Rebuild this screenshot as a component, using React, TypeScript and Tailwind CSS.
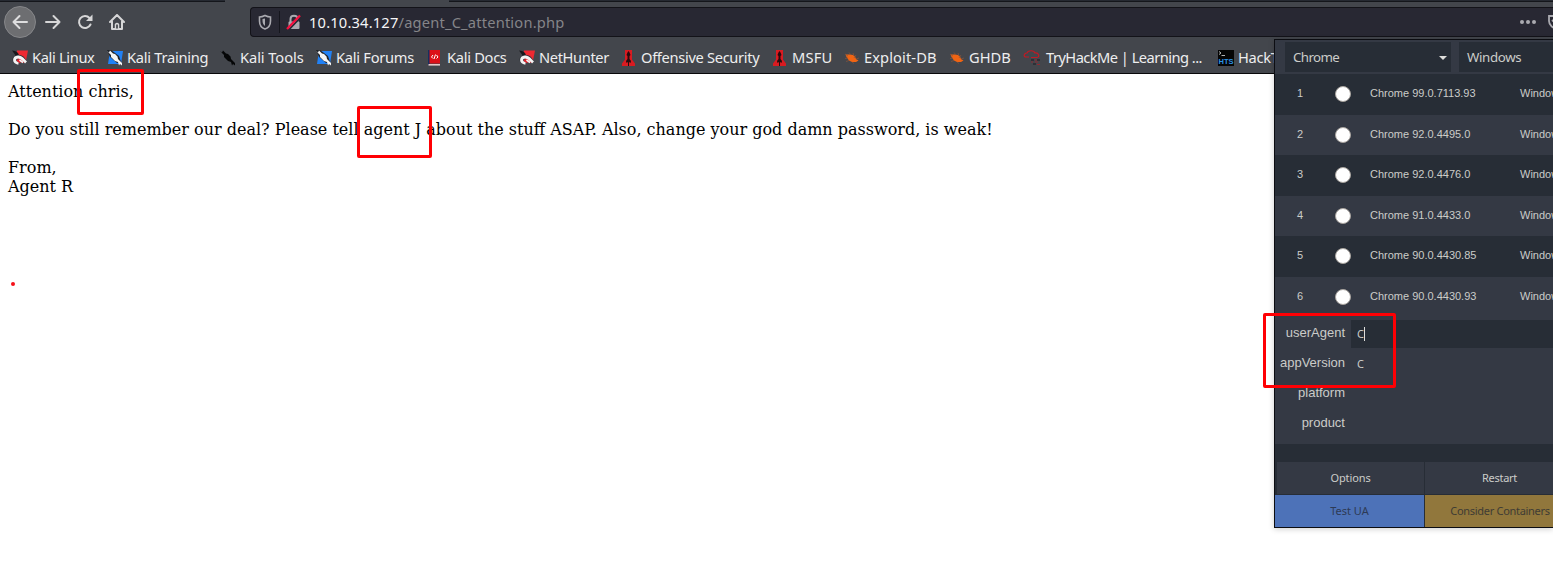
import React from "react";

function ToolShape({ fill }: { fill: string }) {
  return (
    <path
      d="M0 1 L2 2.500 L3 .5 L6 3.500 L8 4 L10.500 6.500 L11 9 L12.500 10.500 L15 13 L15 15.500 L13 14 L12 15.500 L11 12 L8 11 L6 9 L4 7 L4 5 Z"
      fill={fill}
    />
  );
}

function Magnet() {
  return (
    <svg className="size-4 shrink-0" viewBox="0 0 16 16">
      <path d="M5 0.500 H16 L13.500 13 L8 12 L4 6 Z" fill="#ee2932" />
      <path d="M0 .5 L3 1 L5 2 L7 4.500 L4 6 Z" fill="#17181c" />
      <path d="M3 12 C0 8.500 3.500 5.500 7 6 C10.500 6.300 12.500 9 13.500 12.500" fill="none" stroke="#2c2f35" strokeWidth="2.500" />
      <path d="M6.500 13.300 C1 12.500 1.500 7.500 6 7 C9.500 6.700 11 9.500 14 12.500" fill="none" stroke="#f4f4f4" strokeWidth="2.800" />
      <path d="M5 10 L8.500 12.500" stroke="#e5212b" strokeWidth="2" />
      <path d="M7.500 10 L11 12.500" stroke="#f4f4f4" strokeWidth="1.600" />
    </svg>
  );
}

function BlueTool() {
  return (
    <svg className="size-4 shrink-0" viewBox="0 0 16 16">
      <path d="M3 1 H16 L14 14 H1 Z" fill="#2181f5" />
      <path d="M0 0 L4 0 L12 6 L14 12 L10 13 L3 7 Z" fill="#22252a" />
      <ToolShape fill="#f5f5f5" />
    </svg>
  );
}

function BlackTool() {
  return (
    <svg className="size-4 shrink-0" viewBox="0 0 16 16">
      <ToolShape fill="#050607" />
    </svg>
  );
}

function Book() {
  return (
    <svg className="size-4 shrink-0" viewBox="0 0 16 16">
      <path d="M1 0 H3 V15 H1 Z" fill="#172f60" />
      <path d="M2.500 0 H13 V13.500 H2.500 Z" fill="#dc1018" />
      <path d="M1.500 14 H13 V15.600 H1.500 Z" fill="#e3c9c9" />
      <path d="M6 5 L4.500 7 L6 8.500 M9.500 5 L11 7 L9.500 8.500 M8.500 4.500 L7 9" fill="none" stroke="#fff" strokeWidth="1" />
    </svg>
  );
}

function Tower() {
  return (
    <svg className="size-4 shrink-0" viewBox="0 0 16 16">
      <path d="M4 0 H11 V9.500 L14 13.500 V16 H1 V13.500 L4 9.500 Z" fill="#d91b21" />
      <path d="M7.500 1 L8.500 2.500 L9.500 5 L8.500 6 V9 L10 11 L9.500 13 L8 12 V16 H7 V12 L5.500 13 L5 11 L6.500 9 V6 L5.500 5 L6.500 2.500 Z" fill="#260b0e" />
    </svg>
  );
}

function Bug() {
  return (
    <svg className="size-4 shrink-0" viewBox="0 0 16 16">
      <path d="M1.500 4.500 L6 4.500 L9 5 L11 6.500 L12 9 L14.500 10.500 L12 12 L8 12 L5 10.500 L2.500 7 Z" fill="#f06413" />
      <path d="M1 4 L4 6 M5 2.500 L7 5 M9 3 L10 6 M12 5 L10 8 M1 8.500 L4 8 M2 11.500 L5 10.500 M8 12 L10 13.500 M12 9 L15 8" stroke="#8d553a" strokeWidth=".7" />
    </svg>
  );
}

function Cloud() {
  return (
    <svg className="size-[18px] shrink-0" viewBox="0 0 18 18">
      <path d="M6 8 H3 C0 8 1 4 4 4 C5 1 11 1 12 4 C16 3.500 17 8 14 8.500 H8" fill="none" stroke="#c31923" strokeWidth="1.200" />
      <path d="M8 11 H11 M14 11 H17 M10 15 H13" stroke="#282a30" strokeWidth="1.300" />
      <path d="M12 11 H14 M8 13 H10 M12 13 H15 M14 15.500 H17" stroke="#8e2930" strokeWidth="1.200" />
    </svg>
  );
}

function Hts() {
  return (
    <svg className="size-4 shrink-0" viewBox="0 0 16 16">
      <rect width="16" height="16" fill="#050505" />
      <path d="M1 1.500 L3 3 L1 4.500 M3.500 5.500 H7" fill="none" stroke="#c6c6c6" strokeWidth=".9" />
      <text x="0.500" y="14" fontFamily="Liberation Sans" fontWeight="700" fontSize="8" textLength="15" lengthAdjust="spacingAndGlyphs" fill="#2b91e4">
        HTS
      </text>
    </svg>
  );
}

const bookmarks = [
  { name: "Kali Linux", icon: <Magnet />, width: "w-[95px]", tracking: "tracking-[-0.35px]" },
  { name: "Kali Training", icon: <BlueTool />, width: "w-[113px]", tracking: "tracking-[-0.27px]" },
  { name: "Kali Tools", icon: <BlackTool />, width: "w-[96px]", tracking: "tracking-[-0.07px]" },
  { name: "Kali Forums", icon: <BlueTool />, width: "w-[111px]", tracking: "tracking-[-0.27px]" },
  { name: "Kali Docs", icon: <Book />, width: "w-[92px]", tracking: "tracking-[-0.3px]" },
  { name: "NetHunter", icon: <Magnet />, width: "w-[102px]", tracking: "tracking-[-0.38px]" },
  { name: "Offensive Security", icon: <Tower />, width: "w-[151px]", tracking: "tracking-[-0.32px]" },
  { name: "MSFU", icon: <Tower />, width: "w-[72px]", tracking: "tracking-[0.2px]" },
  { name: "Exploit-DB", icon: <Bug />, width: "w-[105px]", tracking: "tracking-[0.1px]" },
  { name: "GHDB", icon: <Bug />, width: "w-[74px]", tracking: "tracking-normal" },
  { name: "TryHackMe | Learning ...", icon: <Cloud />, width: "w-[195px]", tracking: "ml-px tracking-[-0.54px]" },
  { name: "HackT", icon: <Hts />, width: "w-[120px]", tracking: "tracking-[-0.3px]" },
];

const agents = [
  "Chrome 99.0.7113.93",
  "Chrome 92.0.4495.0",
  "Chrome 92.0.4476.0",
  "Chrome 91.0.4433.0",
  "Chrome 90.0.4430.85",
  "Chrome 90.0.4430.93",
];

const fields = [
  { label: "userAgent", value: "C", active: true },
  { label: "appVersion", value: "C", active: false },
  { label: "platform", value: "", active: false },
  { label: "product", value: "", active: false },
];

function Toolbar() {
  return (
    <div className="flex h-[41px] items-start">
      <div className="flex h-10 w-[250px] shrink-0 items-center pl-1">
        <div className="flex size-8 items-center justify-center rounded-full border border-[#86878a] bg-[#6d6e71]">
          <svg className="size-4" viewBox="0 0 16 16" fill="none" stroke="#dededf" strokeWidth="2" strokeLinecap="round" strokeLinejoin="round">
            <path d="M15 8 H1.500 M7.500 2 L1.500 8 L7.500 14" />
          </svg>
        </div>
        <svg className="ml-[9px] size-4" viewBox="0 0 16 16" fill="none" stroke="#d6d6d7" strokeWidth="2" strokeLinecap="round" strokeLinejoin="round">
          <path d="M1 8 H14.500 M8.500 2 L14.500 8 L8.500 14" />
        </svg>
        <svg className="ml-4 size-4" viewBox="0 0 16 16">
          <path d="M13.500 10.500 A6 6 0 1 1 12.500 4" fill="none" stroke="#d6d6d7" strokeWidth="2" strokeLinecap="round" />
          <path d="M15.500 .5 V7 H9 Z" fill="#d6d6d7" />
        </svg>
        <svg className="ml-4 size-4" viewBox="0 0 16 16" fill="none" stroke="#d6d6d7" strokeWidth="2" strokeLinecap="round" strokeLinejoin="round">
          <path d="M1 8 L8 1 L15 8 M3 7.500 V15 H13 V7.500" />
          <path d="M6.500 14.500 V10.500 Q8 8.500 9.500 10.500 V14.500" strokeWidth="1.500" />
          <path d="M8 11.500 V14.500" stroke="#45474c" strokeWidth="1" />
        </svg>
      </div>
      <div className="mt-[5px] flex h-[30px] flex-1 items-center rounded-l border border-r-0 border-[#131319] bg-[#282833]">
        <svg className="ml-1.5 size-4" viewBox="0 0 16 16" fill="none">
          <path d="M8 1.500 C10 2.500 12 3 13.500 3 V7 C13.500 11 11 14 8 15 C5 14 2.500 11 2.500 7 V3 C4 3 6 2.500 8 1.500 Z" stroke="#aaaab0" strokeWidth="1.600" />
          <path d="M8 4.500 V12 C6.500 11 5.500 9 5.500 7 V5 Z" fill="#aaaab0" />
        </svg>
        <div className="ml-1.5 h-[22px] w-px bg-[#15161d]" />
        <svg className="ml-1.5 size-4" viewBox="0 0 16 16" fill="none">
          <path d="M4.500 8 V5 C4.500 .6 11.500 .6 11.500 5 V8" stroke="#aaaab0" strokeWidth="2" />
          <rect x="2.500" y="7.500" width="11" height="7.500" rx="1" fill="#aaaab0" />
          <path d="M2.500 16 L15.500 2.500" stroke="#282833" strokeWidth="1.800" />
          <path d="M1 15 L14 1.500" stroke="#f5103f" strokeWidth="2.300" />
        </svg>
        <span className="ml-[7px] flex-1 text-[14.67px] leading-[20px] tracking-[0.19px] text-[#858589]">
          <span className="text-[#f5f5f7]">10.10.34.127</span>/agent_C_attention.php
        </span>
        <svg className="h-4 w-4" viewBox="0 0 16 16" fill="#aaaab0">
          <circle cx="2" cy="8" r="2" />
          <circle cx="8" cy="8" r="2" />
          <circle cx="14" cy="8" r="2" />
        </svg>
        <div className="ml-3 w-[5px] overflow-hidden">
          <svg className="size-4" viewBox="0 0 16 16" fill="none" stroke="#aaaab0" strokeWidth="1.800">
            <path d="M1 2 H15 V7 C15 11 11 14 8 15 C5 14 1 11 1 7 Z M4 6 L8 10 L12 6" />
          </svg>
        </div>
      </div>
    </div>
  );
}

function AgentPanel() {
  return (
    <div className="absolute left-[1274px] top-[39px] h-[489px] w-[279px] overflow-hidden border border-r-0 border-[#0c0d12] bg-[#272d36] text-[#cbccc9] shadow-[0_1px_6px_rgba(0,0,0,0.2)]">
      <div className="flex h-[34px] w-[400px] gap-2 bg-[#343944] pb-0.5 pl-2.5 pt-0.5 text-[13.3px]">
        <div className="flex w-[166px] items-center justify-between bg-[#272d36] pl-2 pr-1 pt-px">
          <span className="tracking-[-0.6px]">Chrome</span>
          <svg className="h-1 w-2" viewBox="0 0 8 4"><path d="M0 0 H8 L4 4 Z" fill="#dededc" /></svg>
        </div>
        <div className="flex w-[166px] items-center bg-[#272d36] pl-2 pt-px tracking-[-0.35px]">Windows</div>
      </div>
      <div className="w-[400px] font-['Liberation_Sans',sans-serif] text-[11px]">
        {agents.map((agent, i) => (
          <div key={agent} className={`flex h-[40.5px] items-center pb-0.5 ${i % 2 ? "bg-[#343944]" : "bg-[#272d36]"}`}>
            <span className="w-[50px] text-center">{i + 1}</span>
            <span className="ml-2.5 mt-0.5 size-4 rounded-full border border-[#a9a49f] bg-white" />
            <span className="ml-[19px] w-[150px]">{agent}</span>
            <span>Windows</span>
          </div>
        ))}
      </div>
      <div className="flex h-[127px] flex-col gap-0.5 bg-[#343944] pt-[3px] font-['Liberation_Sans',sans-serif] text-[13px]">
        {fields.map((field) => (
          <div key={field.label} className="flex h-7 items-center">
            <span className="w-[70px] pb-0.5 text-right">{field.label}</span>
            <span className={`ml-1.5 flex h-7 flex-1 items-center pl-1.5 font-['Noto_Sans',sans-serif] text-[11px] ${field.active ? "bg-[#272d36]" : ""}`}>
              {field.value}
              {field.active && <span className="h-3.5 w-px bg-[#dededc]" />}
            </span>
          </div>
        ))}
      </div>
      <div className="mt-[18px] grid w-[299px] grid-cols-[149px_149px] gap-px text-center text-[11px] leading-8 tracking-[-0.25px]">
        <div className="ml-0.5 h-8 bg-[#343944] tracking-[-0.1px]">Options</div>
        <div className="h-8 bg-[#343944]">Restart</div>
        <div className="h-8 bg-[#4d72b8] tracking-normal text-[#2d3a55]">Test UA</div>
        <div className="h-8 bg-[#91773c] pl-px tracking-[-0.3px] text-[#403c34]">Consider Containers</div>
      </div>
    </div>
  );
}

export default function App() {
  return (
    <div className="relative h-[575px] w-[1553px] overflow-hidden bg-white font-['Noto_Sans',sans-serif]">
      <header className="h-[74px] border-b border-[#08080a] bg-[#43464c]">
        <div className="flex h-0.5 justify-between">
          <div className="w-[225px] border-b border-[#14161b] bg-[#252931]" />
          <div className="w-[1104px] border-b border-[#14161b] bg-[#252931]" />
        </div>
        <Toolbar />
        <nav className="flex h-[30px] w-[1274px] items-center overflow-hidden pl-3 text-[14.67px] text-[#eeeeef]">
          {bookmarks.map((bookmark) => (
            <div key={bookmark.name} className={`flex shrink-0 items-center gap-1 whitespace-nowrap ${bookmark.width}`}>
              {bookmark.icon}
              <span className={`pb-0.5 ${bookmark.tracking}`}>{bookmark.name}</span>
            </div>
          ))}
        </nav>
      </header>
      <main className="px-2 pt-2 font-['DejaVu_Serif',serif] text-[16px] leading-[19px] text-black">
        <p>Attention chris,</p>
        <p className="mt-[19px]">Do you still remember our deal? Please tell agent J about the stuff ASAP. Also, change your god damn password, is weak!</p>
        <p className="mt-[19px]">From,<br />Agent R</p>
      </main>
      <AgentPanel />
      <div className="absolute left-[77px] top-[69px] h-[46px] w-[67px] rounded-[2px] border-3 border-[#ff0004]" />
      <div className="absolute left-[357px] top-[106px] h-[52px] w-[75px] rounded-[2px] border-3 border-[#ff0004]" />
      <div className="absolute left-[1263px] top-[313px] h-[75px] w-[133px] rounded-[2px] border-3 border-[#ff0004]" />
      <div className="absolute left-[11px] top-[282px] size-1 rounded-full bg-[#f51018]" />
    </div>
  );
}
